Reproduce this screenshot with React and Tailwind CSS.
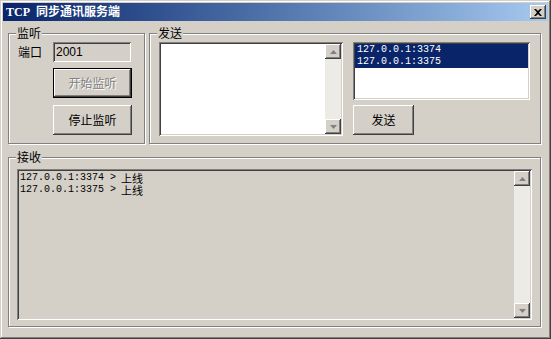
import React from 'react';

const raised =
  'shadow-[inset_-1px_-1px_0_#404040,inset_1px_1px_0_#ffffff,inset_-2px_-2px_0_#808080,inset_2px_2px_0_#d4d0c8]';
const sunken =
  'shadow-[inset_1px_1px_0_#808080,inset_-1px_-1px_0_#ffffff,inset_2px_2px_0_#404040,inset_-2px_-2px_0_#d4d0c8]';

const ui = { fontFamily: '"Noto Sans CJK SC", "Liberation Sans", sans-serif' };
const mono = { fontFamily: '"Liberation Mono", monospace' };

const Arrow = ({ down }) => (
  <svg width="7" height="4" viewBox="0 0 7 4" className={down ? 'rotate-180' : ''}>
    <path d="M3.5 0 L7 4 L0 4 Z" fill="#808080" />
  </svg>
);

const ScrollBar = () => (
  <div className="flex flex-col w-[16px] h-full bg-[#ecebe6]">
    <div className={`w-[16px] h-[15px] bg-[#d4d0c8] flex items-center justify-center ${raised}`}>
      <Arrow />
    </div>
    <div className="flex-1" />
    <div className={`w-[16px] h-[15px] bg-[#d4d0c8] flex items-center justify-center ${raised}`}>
      <Arrow down />
    </div>
  </div>
);

const Group = ({ title, className, children }) => (
  <div
    className={`relative border border-[#808080] shadow-[inset_1px_1px_0_#ffffff,1px_1px_0_#ffffff] ${className}`}
  >
    <span
      className="absolute left-[7px] -top-[7px] px-[1px] bg-[#d4d0c8] text-[12px] leading-[12px] text-black"
      style={ui}
    >
      {title}
    </span>
    {children}
  </div>
);

const Line = ({ addr }) => (
  <div className="flex items-center h-[12px] leading-[12px] whitespace-nowrap">
    <span className="text-[10px]" style={mono}>
      {addr} &gt;
    </span>
    <span className="text-[11px] leading-[11px] ml-[5px]" style={ui}>
      上线
    </span>
  </div>
);

export default function App() {
  return (
    <div
      className="w-[551px] h-[339px] bg-[#d4d0c8] p-[3px] flex flex-col shadow-[inset_-1px_-1px_0_#404040,inset_1px_1px_0_#d4d0c8,inset_-2px_-2px_0_#808080,inset_2px_2px_0_#ffffff]"
      style={ui}
    >
      {/* title bar */}
      <div className="h-[18px] bg-linear-to-r from-[#0a246a] to-[#a6caf0] flex items-center justify-between pl-[3px] pr-[2px]">
        <span
          className="text-white font-bold text-[12px] leading-[12px]"
          style={{ fontFamily: '"Liberation Serif", "Noto Sans CJK SC", serif' }}
        >
          TCP&nbsp;&nbsp;同步通讯服务端
        </span>
        <div className={`w-[16px] h-[14px] bg-[#d4d0c8] flex items-center justify-center ${raised}`}>
          <svg width="8" height="7" viewBox="0 0 8 7">
            <path d="M0 0 L2 0 L4 2 L6 0 L8 0 L5 3.5 L8 7 L6 7 L4 5 L2 7 L0 7 L3 3.5 Z" fill="#000" />
          </svg>
        </div>
      </div>

      <div className="flex flex-col pl-[5px] pr-[7px] pt-[12px]">
        {/* top row */}
        <div className="flex gap-[4px] h-[111px]">
          <Group title="监听" className="w-[137px] h-full">
            <div className="flex items-center mt-[8px]">
              <span className="ml-[9px] w-[35px] text-[12px] leading-[12px]">端口</span>
              <div
                className={`w-[78px] h-[20px] bg-[#d4d0c8] flex items-center pl-[3px] text-[12px] ${sunken}`}
                style={{ fontFamily: '"Liberation Sans", sans-serif' }}
              >
                2001
              </div>
            </div>
            <div className="ml-[44px] mt-[6px] w-[79px] h-[30px] border border-black">
              <div
                className={`w-full h-full bg-[#d4d0c8] flex items-center justify-center text-[12px] text-[#808080] [text-shadow:1px_1px_0_#ffffff] ${raised}`}
              >
                开始监听
              </div>
            </div>
            <div
              className={`ml-[44px] mt-[7px] w-[79px] h-[30px] bg-[#d4d0c8] flex items-center justify-center text-[12px] text-black ${raised}`}
            >
              停止监听
            </div>
          </Group>

          <Group title="发送" className="flex-1 h-full">
            <div className="flex mt-[8px]">
              <div className={`ml-[9px] w-[184px] h-[94px] bg-white p-[2px] flex justify-end ${sunken}`}>
                <ScrollBar />
              </div>
              <div className="ml-[10px] flex flex-col">
                <div className={`w-[177px] h-[58px] bg-white p-[2px] ${sunken}`}>
                  <div className="bg-[#0a246a] text-white pl-[2px] text-[10px]" style={mono}>
                    <div className="h-[12px] leading-[12px]">127.0.0.1:3374</div>
                    <div className="h-[12px] leading-[12px]">127.0.0.1:3375</div>
                  </div>
                </div>
                <div
                  className={`mt-[5px] w-[61px] h-[30px] bg-[#d4d0c8] flex items-center justify-center text-[12px] text-black ${raised}`}
                >
                  发送
                </div>
              </div>
            </div>
          </Group>
        </div>

        {/* receive */}
        <Group title="接收" className="mt-[13px] h-[170px]">
          <div className={`ml-[8px] mt-[11px] w-[515px] h-[151px] bg-[#d4d0c8] p-[2px] flex ${sunken}`}>
            <div className="flex-1 pl-[1px] pt-[1px] text-black">
              <Line addr="127.0.0.1:3374" />
              <Line addr="127.0.0.1:3375" />
            </div>
            <ScrollBar />
          </div>
        </Group>
      </div>
    </div>
  );
}
